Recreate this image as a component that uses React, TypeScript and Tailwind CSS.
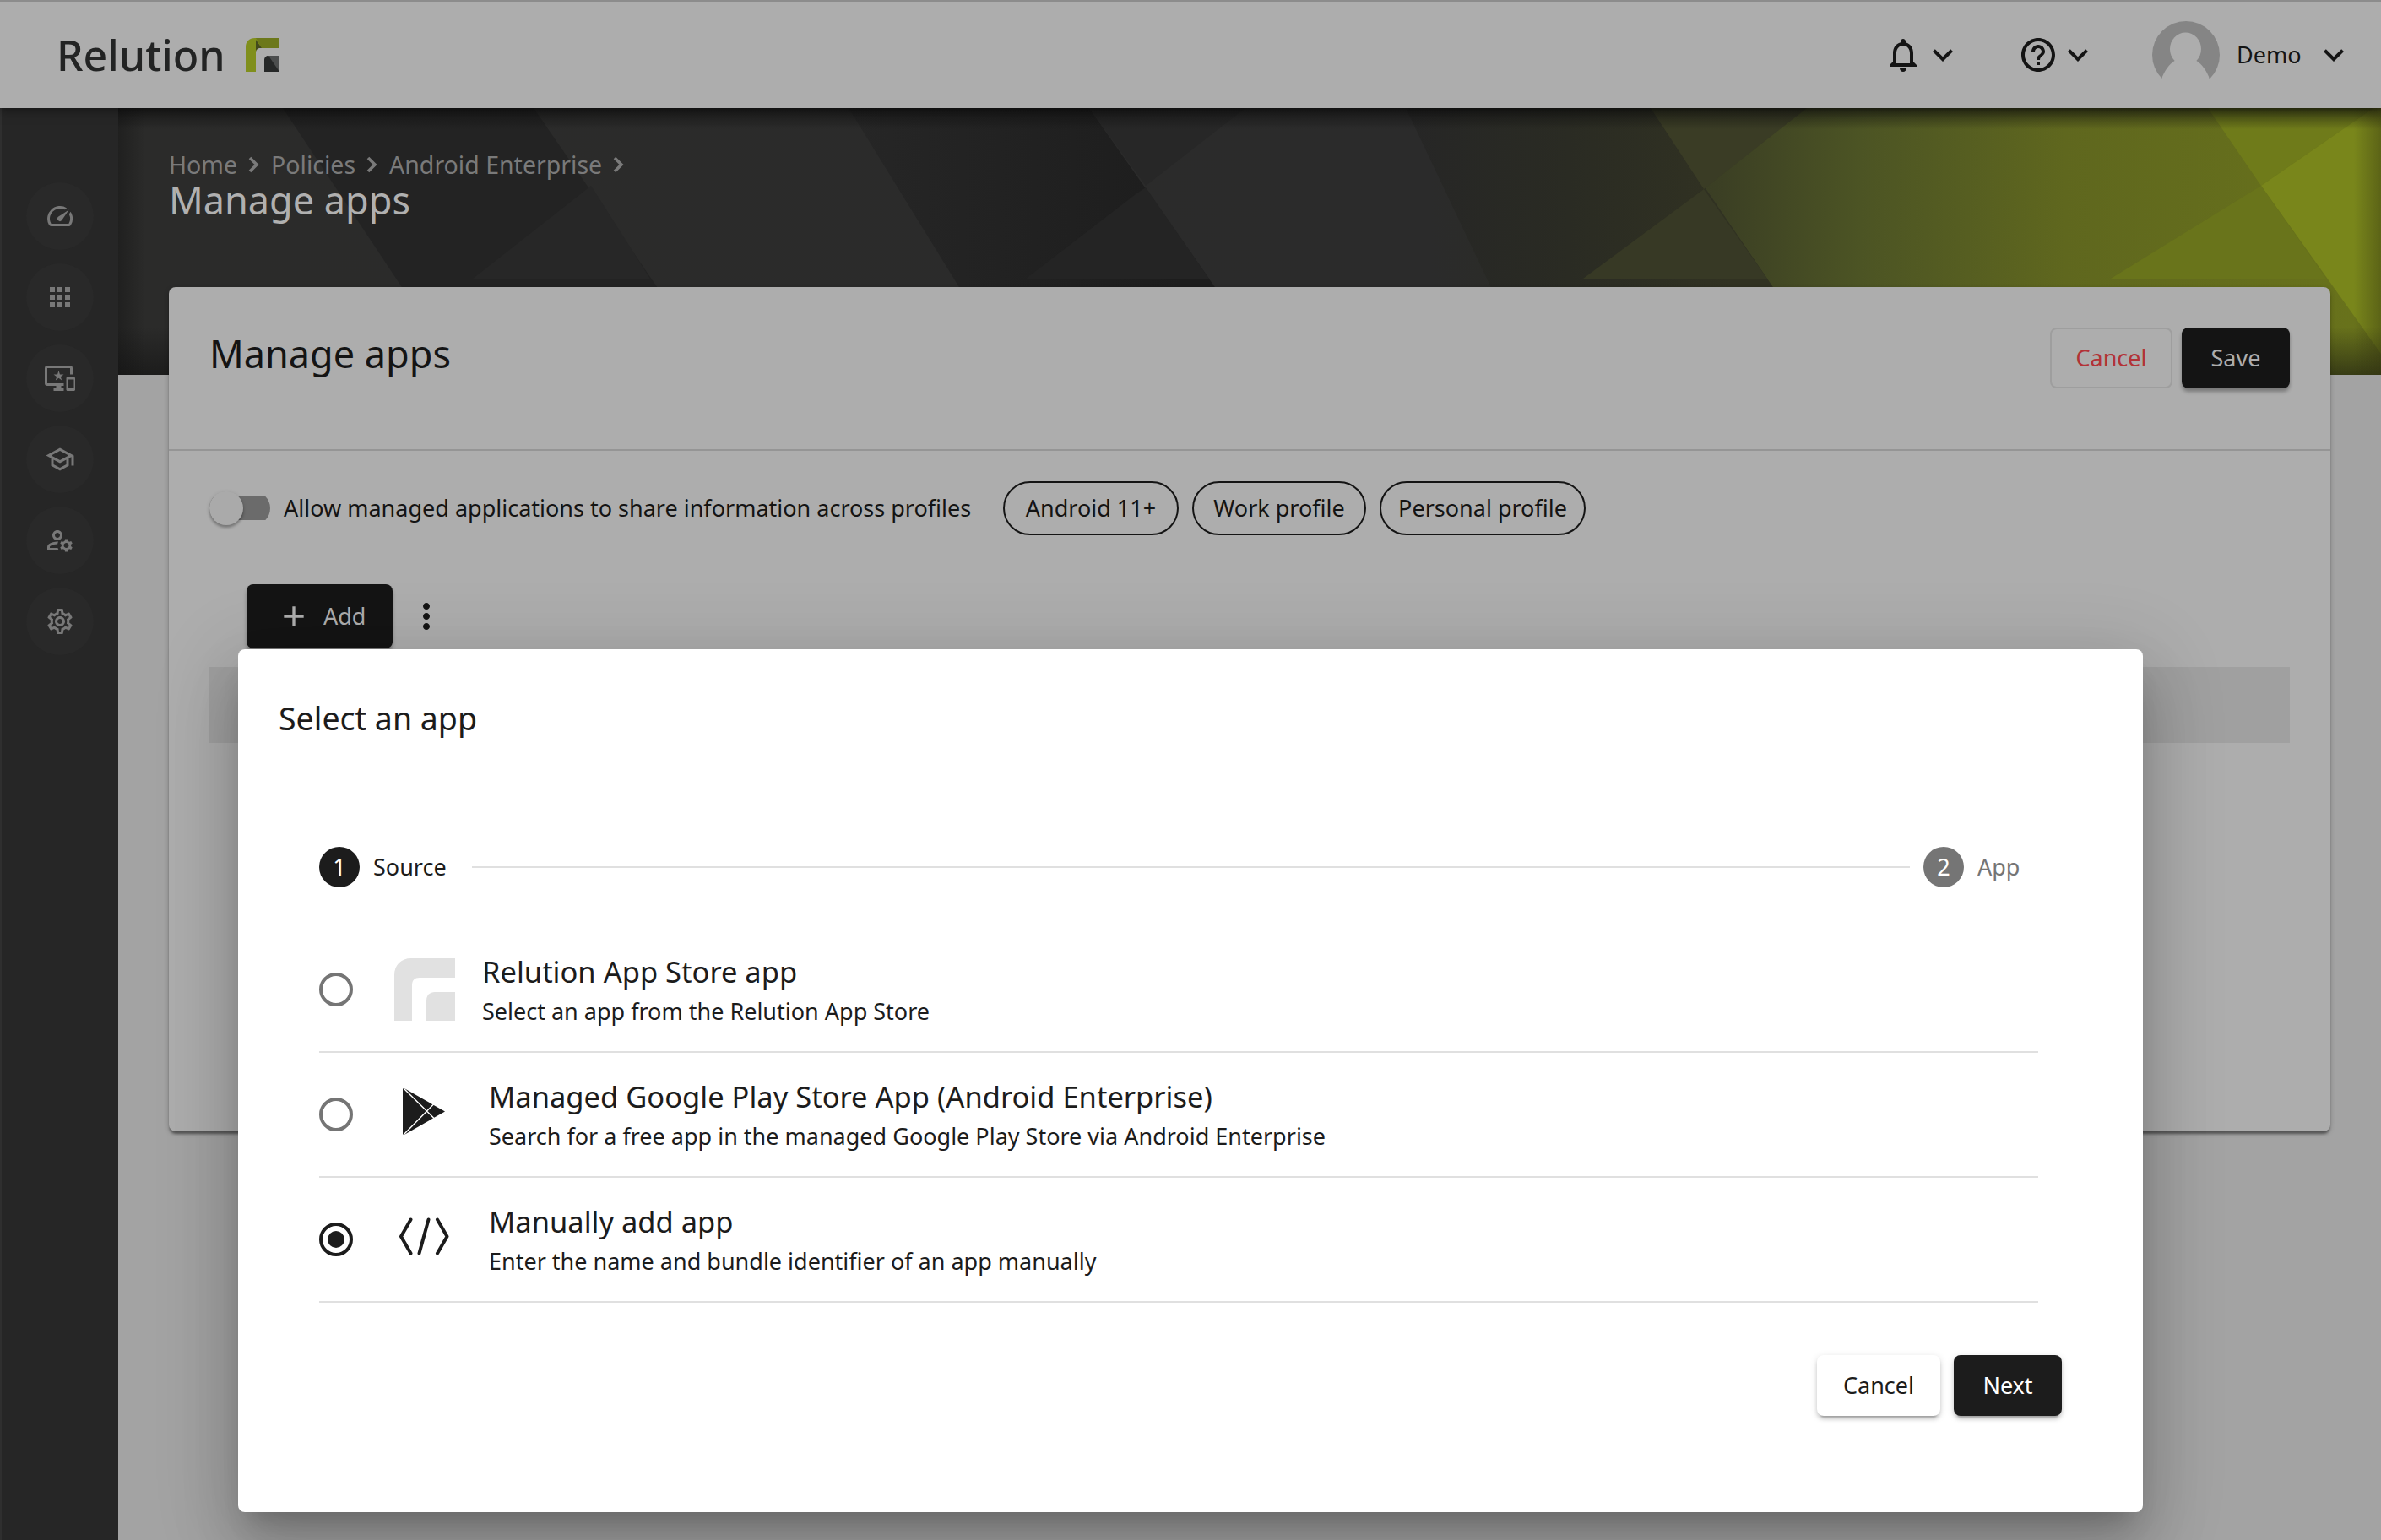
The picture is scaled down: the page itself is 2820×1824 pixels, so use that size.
import type { ReactNode } from "react";
import clsx from "clsx";
import {
  MdAdd,
  MdApps,
  MdHelpOutline,
  MdKeyboardArrowDown,
  MdMoreVert,
  MdNotificationsNone,
  MdOutlineImportantDevices,
  MdOutlineManageAccounts,
  MdOutlineSchool,
  MdOutlineSettings,
  MdOutlineSpeed,
} from "react-icons/md";

const NAV_ICONS = [
  MdOutlineSpeed,
  MdApps,
  MdOutlineImportantDevices,
  MdOutlineSchool,
  MdOutlineManageAccounts,
  MdOutlineSettings,
];

const BREADCRUMBS = ["Home", "Policies", "Android Enterprise"];

const CHIPS = [
  { label: "Android 11+", width: "w-[208px]" },
  { label: "Work profile", width: "w-[206px]" },
  { label: "Personal profile", width: "w-[244px]" },
];

function Logo() {
  return (
    <div className="flex items-center">
      <span className="w-[224px] text-[50px] leading-none font-medium text-[#232424]">
        Relution
      </span>
      <svg viewBox="0 0 40 40" className="size-10">
        <path d="M0 40V11C0 4 4 0 11 0H40V12H17C14 12 12 14 12 17V40Z" fill="#808f1c" />
        <path d="M12 0H40V12H19Z" fill="#6c781b" />
        <path d="M12 2V17C12 14 14 12 17 12H19Z" fill="#434a1c" />
        <path d="M22 40V26C22 23 24 21 27 21H40V40Z" fill="#262828" />
        <path d="M27 21H40V40Z" fill="#4c4e4e" />
      </svg>
    </div>
  );
}

function Avatar() {
  return (
    <svg viewBox="0 0 80 80" className="size-20">
      <circle cx="40" cy="40" r="40" fill="#858585" />
      <ellipse cx="39.5" cy="33" rx="18.5" ry="19.5" fill="#adadad" />
      <path
        d="M28 46C20 51 14 59 11 69L11 80H69L68 69C65 59 59 51 51 46Z"
        fill="#adadad"
      />
    </svg>
  );
}

function Header() {
  return (
    <header className="relative z-10 flex h-[128px] items-center border-t-2 border-[#8c8c8c] bg-[#adadad] pr-8 pl-[67px] text-[#141414] shadow-[0_2px_12px_rgba(0,0,0,0.5)]">
      <Logo />
      <div className="ml-auto flex items-center">
        <MdNotificationsNone className="size-12" />
        <MdKeyboardArrowDown className="-ml-px size-12" />
        <MdHelpOutline className="ml-[65px] size-12" />
        <MdKeyboardArrowDown className="-ml-px size-12" />
        <div className="ml-[64px]">
          <Avatar />
        </div>
        <span className="ml-[20px] w-[91px] text-[27px]">Demo</span>
        <MdKeyboardArrowDown className="size-12" />
      </div>
    </header>
  );
}

function Sidebar() {
  return (
    <nav className="flex w-[140px] shrink-0 flex-col items-center gap-4 border-l-2 border-[#2f2f2f] bg-[#262626] pt-[88px]">
      {NAV_ICONS.map((Icon, index) => (
        <div
          key={index}
          className="flex size-20 items-center justify-center rounded-full bg-[#292929] text-[#787878]"
        >
          <Icon className="size-9" />
        </div>
      ))}
    </nav>
  );
}

function BannerArt() {
  return (
    <svg
      viewBox="140 128 2680 316"
      preserveAspectRatio="none"
      className="absolute inset-x-0 top-0 h-[316px] w-full"
    >
      <defs>
        <linearGradient id="base" gradientUnits="userSpaceOnUse" x1="140" y1="0" x2="2820" y2="0">
          <stop offset="0" stopColor="#2b2b2a" />
          <stop offset="0.58" stopColor="#2b2b2b" />
          <stop offset="0.63" stopColor="#2b2c26" />
          <stop offset="0.71" stopColor="#3c4024" />
          <stop offset="0.77" stopColor="#4c5424" />
          <stop offset="0.86" stopColor="#5f671e" />
          <stop offset="1" stopColor="#69731b" />
        </linearGradient>
        <linearGradient id="fold" gradientUnits="userSpaceOnUse" x1="1010" y1="0" x2="1400" y2="0">
          <stop offset="0" stopColor="#262626" />
          <stop offset="1" stopColor="#1d1d1d" />
        </linearGradient>
        <linearGradient id="foldOlive" gradientUnits="userSpaceOnUse" x1="1665" y1="0" x2="2050" y2="0">
          <stop offset="0" stopColor="#262626" />
          <stop offset="0.5" stopColor="#2a2b23" />
          <stop offset="1" stopColor="#313222" />
        </linearGradient>
        <linearGradient id="top" x1="0" y1="0" x2="0" y2="1">
          <stop offset="0" stopColor="#101010" stopOpacity="0.6" />
          <stop offset="0.08" stopColor="#101010" stopOpacity="0" />
          <stop offset="0.82" stopColor="#101010" stopOpacity="0" />
          <stop offset="1" stopColor="#101010" stopOpacity="0.55" />
        </linearGradient>
        <linearGradient id="edge" x1="0" y1="0" x2="1" y2="0">
          <stop offset="0" stopColor="#101010" stopOpacity="0.4" />
          <stop offset="0.012" stopColor="#101010" stopOpacity="0" />
          <stop offset="0.988" stopColor="#303010" stopOpacity="0" />
          <stop offset="1" stopColor="#303010" stopOpacity="0.4" />
        </linearGradient>
      </defs>
      <rect x="140" y="128" width="2680" height="316" fill="url(#base)" />
      <path d="M335 128H632L850 444H545Z" fill="#232323" />
      <path d="M770 330L560 330L700 220Z" fill="#272727" />
      <path d="M1005 128H1290L1512 444H1200Z" fill="url(#fold)" />
      <path d="M1290 128H1475L1357 220Z" fill="#272727" />
      <path d="M1345 230L1215 330H1432L1357 222Z" fill="#242424" />
      <path d="M1665 128H1955L2171 444H1815Z" fill="url(#foldOlive)" />
      <path d="M1955 128H2140L2018 224Z" fill="#3a3c25" />
      <path d="M2018 224L1875 330H2093Z" fill="#373925" />
      <path d="M2615 128H2811L2678 220Z" fill="#6f7b1a" />
      <path d="M2811 128H2820V419L2678 220Z" fill="#79861b" />
      <path d="M2678 220L2500 330H2755Z" fill="#69741b" />
      <rect x="140" y="128" width="2680" height="316" fill="url(#top)" />
      <rect x="140" y="128" width="2680" height="316" fill="url(#edge)" />
    </svg>
  );
}

function Breadcrumbs() {
  return (
    <div className="flex h-[134px] items-start text-[28.5px] leading-[40px] text-[#7a7a7a]">
      {BREADCRUMBS.map((crumb) => (
        <div key={crumb} className="flex items-center">
          <span>{crumb}</span>
          <svg viewBox="0 0 40 40" className="h-10 w-10">
            <path d="M15 12L23 20L15 28" fill="none" stroke="currentColor" strokeWidth="3.6" />
          </svg>
        </div>
      ))}
    </div>
  );
}

function Toggle() {
  return (
    <div className="flex h-10 w-[72px] items-center rounded-full bg-[linear-gradient(#6b6b6b,#6b6b6b)] bg-[length:100%_28px] bg-center bg-no-repeat">
      <div className="size-10 rounded-full bg-[#aaaaaa] shadow-[0_3px_3px_rgba(0,0,0,0.25),0_1px_5px_rgba(0,0,0,0.12)]" />
    </div>
  );
}

function PolicyCard() {
  return (
    <section className="flex h-[1000px] w-[2560px] flex-col rounded-lg bg-[#adadad] text-[#141414] shadow-[0_4px_3px_-1px_rgba(0,0,0,0.4),0_2px_6px_rgba(0,0,0,0.2)]">
      <div className="flex h-[194px] items-start justify-between border-b-2 border-[#959595] px-12 pt-12">
        <h2 className="text-[45px] leading-[62px]">Manage apps</h2>
        <div className="flex gap-[11px] text-[27px]">
          <button className="h-[72px] w-[145px] rounded-lg border-2 border-[#9e9e9e] text-[#b23236]">
            Cancel
          </button>
          <button className="h-[72px] w-[128px] rounded-lg bg-[#141414] text-[#adadad] shadow-[0_4px_4px_rgba(0,0,0,0.3)]">
            Save
          </button>
        </div>
      </div>

      <div className="flex flex-col px-12 pt-9">
        <div className="flex h-16 items-center">
          <Toggle />
          <span className="ml-[16px] w-[852px] text-[27px] whitespace-nowrap">
            Allow managed applications to share information across profiles
          </span>
          <div className="flex gap-4">
            {CHIPS.map(({ label, width }) => (
              <span
                key={label}
                className={clsx(
                  "flex h-16 items-center justify-center rounded-full border-2 border-[#141414] text-[27px] whitespace-nowrap",
                  width,
                )}
              >
                {label}
              </span>
            ))}
          </div>
        </div>

        <div className="mt-[58px] ml-11 flex items-center">
          <button className="flex h-[76px] w-[173px] items-center rounded-lg bg-[#141414] pl-[36px] text-[27px] text-[#adadad] shadow-[0_4px_4px_rgba(0,0,0,0.3)]">
            <MdAdd className="mr-[15px] size-10" />
            Add
          </button>
          <MdMoreVert className="ml-4 size-12" />
        </div>

        <div className="mt-[22px] h-[90px] bg-[#a0a0a0]" />
      </div>
    </section>
  );
}

function StepBadge({ step, active }: { step: number; active?: boolean }) {
  return (
    <span
      className={clsx(
        "flex size-12 items-center justify-center rounded-full text-[27px] text-white",
        active ? "bg-[#1c1c1c]" : "bg-[#757575]",
      )}
    >
      {step}
    </span>
  );
}

function Stepper() {
  return (
    <div className="flex items-center text-[27px]">
      <StepBadge step={1} active />
      <span className="ml-4 w-[117px]">Source</span>
      <div className="h-0.5 w-[1703px] bg-[#e0e0e0]" />
      <div className="ml-4 flex items-center gap-4 text-[#757575]">
        <StepBadge step={2} />
        <span>App</span>
      </div>
    </div>
  );
}

interface SourceOptionProps {
  title: string;
  description: string;
  icon: ReactNode;
  selected?: boolean;
}

function SourceOption({ title, description, icon, selected }: SourceOptionProps) {
  return (
    <div className="flex h-[148px] items-center border-b-2 border-[#e0e0e0]">
      <span
        className={clsx(
          "flex size-10 items-center justify-center rounded-full border-4",
          selected ? "border-[#1c1c1c]" : "border-[#757575]",
        )}
      >
        {selected && <span className="size-5 rounded-full bg-[#1c1c1c]" />}
      </span>
      <div className="mr-8 ml-[49px]">{icon}</div>
      <div>
        <h4 className="text-[34.5px] leading-[52px]">{title}</h4>
        <p className="text-[27px] leading-[42px]">{description}</p>
      </div>
    </div>
  );
}

function RelutionIcon() {
  return (
    <svg viewBox="0 0 72 74" className="h-[74px] w-[72px]" fill="#e1e1e1">
      <path d="M0 74V20C0 8 8 0 20 0H72V23H30C24 23 21 26 21 32V74Z" />
      <path d="M38 74V50C38 44 42 40 48 40H72V74Z" />
    </svg>
  );
}

function PlayIcon() {
  return (
    <svg viewBox="467 1285 80 61" className="mb-[7px] h-[61px] w-20">
      <path d="M477 1287L527 1315.5L477 1344Z" fill="#1c1c1c" />
      <path
        d="M477 1287L514.5 1324M477 1344L514.5 1306"
        stroke="#fff"
        strokeWidth="1.4"
        fill="none"
      />
    </svg>
  );
}

function CodeIcon() {
  return (
    <svg
      viewBox="467 1433 80 61"
      className="mb-[7px] h-[61px] w-20"
      fill="none"
      stroke="#1c1c1c"
      strokeWidth="4"
      strokeLinecap="round"
      strokeLinejoin="round"
    >
      <path d="M486.5 1443.5L475 1463.5L486.5 1483.5M507.5 1443.5L496.5 1483.5M518 1443.5L529.5 1463.5L518 1483.5" />
    </svg>
  );
}

function SelectAppDialog() {
  return (
    <div className="flex h-[1022px] w-[2256px] flex-col rounded-lg bg-white pt-[56px] text-[#1c1c1c] shadow-[0_22px_30px_-14px_rgba(0,0,0,0.2),0_48px_76px_6px_rgba(0,0,0,0.14),0_18px_92px_16px_rgba(0,0,0,0.12)]">
      <h3 className="pl-12 text-[37.5px] leading-[52px]">Select an app</h3>
      <div className="mt-[126px] pl-24">
        <Stepper />
      </div>
      <div className="mt-[48px] pr-[124px] pl-24">
        <SourceOption
          title="Relution App Store app"
          description="Select an app from the Relution App Store"
          icon={<RelutionIcon />}
        />
        <SourceOption
          title="Managed Google Play Store App (Android Enterprise)"
          description="Search for a free app in the managed Google Play Store via Android Enterprise"
          icon={<PlayIcon />}
        />
        <SourceOption
          title="Manually add app"
          description="Enter the name and bundle identifier of an app manually"
          icon={<CodeIcon />}
          selected
        />
      </div>
      <div className="mt-[62px] flex justify-end gap-4 pr-24 text-[27px]">
        <button className="h-[72px] w-[146px] rounded-lg bg-white shadow-[0_6px_2px_-4px_rgba(0,0,0,0.2),0_4px_4px_rgba(0,0,0,0.14),0_2px_10px_rgba(0,0,0,0.12)]">
          Cancel
        </button>
        <button className="h-[72px] w-[128px] rounded-lg bg-[#1c1c1c] text-white shadow-[0_6px_2px_-4px_rgba(0,0,0,0.2),0_4px_4px_rgba(0,0,0,0.14),0_2px_10px_rgba(0,0,0,0.12)]">
          Next
        </button>
      </div>
    </div>
  );
}

export default function App() {
  return (
    <div className="relative flex h-[1824px] w-[2820px] flex-col overflow-hidden bg-[#a3a3a3] font-['Noto_Sans',sans-serif]">
      <Header />
      <div className="flex flex-1">
        <Sidebar />
        <main className="relative flex-1">
          <BannerArt />
          <div className="relative pt-[47px] pl-[60px]">
            <div className="flex flex-col">
              <Breadcrumbs />
              <h1 className="-mt-[103px] mb-[72px] text-[45px] leading-[62px] text-[#b0b0b0]">
                Manage apps
              </h1>
            </div>
            <PolicyCard />
          </div>
        </main>
      </div>
      <div className="absolute inset-0 z-20 flex justify-center pt-[769px]">
        <SelectAppDialog />
      </div>
    </div>
  );
}
